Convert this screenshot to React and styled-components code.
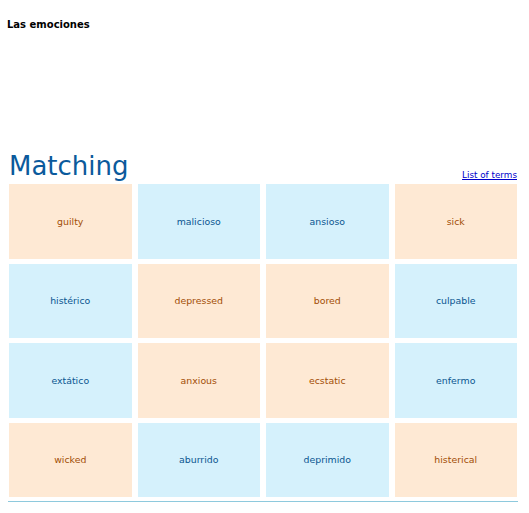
import React from "react";
import styled, { createGlobalStyle } from "styled-components";

const GlobalStyle = createGlobalStyle`
    html, body {
        margin: 0;
        padding: 0;
        background: #fff;
        font-family: "DejaVu Sans", Verdana, sans-serif;
    }
`;

const Page = styled.div`
    width: 529px;
    padding: 18px 11px 0 8px;
    box-sizing: border-box;
`;

const PageTitle = styled.h1`
    margin: 0 0 0 -1px;
    font-size: 10px;
    font-weight: bold;
    color: #000;
    line-height: 14px;
`;

const Spacer = styled.div`
    height: 119px;
`;

const Header = styled.div`
    display: flex;
    justify-content: space-between;
    align-items: flex-end;
    padding-left: 1px;
`;

const Heading = styled.h2`
    margin: 0;
    font-size: 26px;
    font-weight: normal;
    color: #0b5a9c;
    line-height: 30px;
`;

const TermsLink = styled.a`
    font-size: 8.8px;
    color: #0000cc;
    text-decoration: underline;
    margin-bottom: 1px;
    margin-right: 1px;
`;

const Board = styled.div`
    display: grid;
    grid-template-columns: repeat(4, 1fr);
    grid-auto-rows: 74.5px;
    gap: 5px 6px;
    margin-top: 3px;
    padding: 0 1px 4px;
    border-bottom: 1px solid #8ec9dd;
`;

const Card = styled.div`
    display: flex;
    align-items: center;
    justify-content: center;
    font-size: 9.4px;
    background: ${(props) => (props.english ? "#fee9d4" : "#d5f1fc")};
    color: ${(props) => (props.english ? "#a24e06" : "#0b5690")};
    cursor: pointer;
`;

const cards = [
    { text: "guilty", english: true },
    { text: "malicioso" },
    { text: "ansioso" },
    { text: "sick", english: true },
    { text: "histérico" },
    { text: "depressed", english: true },
    { text: "bored", english: true },
    { text: "culpable" },
    { text: "extático" },
    { text: "anxious", english: true },
    { text: "ecstatic", english: true },
    { text: "enfermo" },
    { text: "wicked", english: true },
    { text: "aburrido" },
    { text: "deprimido" },
    { text: "histerical", english: true },
];

const App = function () {
    return (
        <Page>
            <GlobalStyle />
            <PageTitle>Las emociones</PageTitle>
            <Spacer />
            <Header>
                <Heading>Matching</Heading>
                <TermsLink href="#terms">List of terms</TermsLink>
            </Header>
            <Board>
                {cards.map((card, i) => (
                    <Card key={i} english={card.english}>
                        {card.text}
                    </Card>
                ))}
            </Board>
        </Page>
    );
};

export default App;
